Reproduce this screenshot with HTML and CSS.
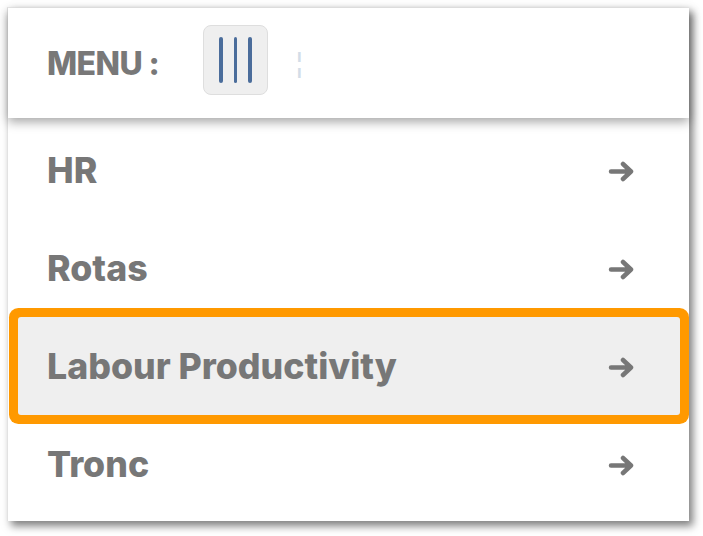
FILE: index.html
```html
<!DOCTYPE html>
<html lang="en">
<head>
    <meta charset="UTF-8">
    <meta name="viewport" content="width=device-width, initial-scale=1.0">
    <title>Menu</title>
    <link rel="stylesheet" href="styles.css">
</head>
<body>
    <div class="panel">
        <header class="menu-header">
            <span class="menu-label">MENU :</span>
            <button class="menu-toggle" type="button" aria-label="Toggle menu">
                <span></span><span></span><span></span>
            </button>
            <span class="menu-ghost">¦</span>
        </header>

        <ul class="menu-list">
            <li class="menu-item">
                <span>HR</span>
                <svg class="arrow" width="27" height="21" viewBox="0 0 27 21"><path d="M3 10.5H23M15 3L23 10.5L15 18" fill="none" stroke="#777" stroke-width="4.5" stroke-linecap="round" stroke-linejoin="round"/></svg>
            </li>
            <li class="menu-item">
                <span>Rotas</span>
                <svg class="arrow" width="27" height="21" viewBox="0 0 27 21"><path d="M3 10.5H23M15 3L23 10.5L15 18" fill="none" stroke="#777" stroke-width="4.5" stroke-linecap="round" stroke-linejoin="round"/></svg>
            </li>
            <li class="menu-item active">
                <span>Labour Productivity</span>
                <svg class="arrow" width="27" height="21" viewBox="0 0 27 21"><path d="M3 10.5H23M15 3L23 10.5L15 18" fill="none" stroke="#777" stroke-width="4.5" stroke-linecap="round" stroke-linejoin="round"/></svg>
            </li>
            <li class="menu-item">
                <span>Tronc</span>
                <svg class="arrow" width="27" height="21" viewBox="0 0 27 21"><path d="M3 10.5H23M15 3L23 10.5L15 18" fill="none" stroke="#777" stroke-width="4.5" stroke-linecap="round" stroke-linejoin="round"/></svg>
            </li>
        </ul>
    </div>
</body>
</html>
```

FILE: styles.css
```css
body {
    font-family: 'Inter', 'Roboto', Arial, sans-serif;
    background-color: #fff;
    margin: 0;
    padding: 7px 0 20px 7px;
}
.panel {
    width: 681px;
    background-color: #fff;
    border-top: 1px solid #ececec;
    border-left: 1px solid #e2e2e2;
    box-shadow: 4px 5px 8px rgba(0, 0, 0, 0.5);
}
.menu-header {
    height: 110px;
    display: flex;
    align-items: center;
    padding-left: 39px;
    background-color: #fff;
    box-shadow: 0 4px 10px rgba(0, 0, 0, 0.35);
    position: relative;
    z-index: 1;
}
.menu-label {
    font-size: 32px;
    font-weight: 800;
    color: #787878;
    letter-spacing: -0.6px;
}
.menu-toggle {
    width: 65px;
    height: 70px;
    margin-left: 44px;
    margin-top: -6px;
    background-color: #efefef;
    border: 1px solid #dedede;
    border-radius: 8px;
    display: flex;
    justify-content: center;
    align-items: center;
    gap: 11px;
    padding: 0;
}
.menu-toggle span {
    width: 3.5px;
    height: 46px;
    border-radius: 2px;
    background-color: #4b6d9b;
}
.menu-ghost {
    font-size: 30px;
    color: #d3dde8;
    margin-left: 27px;
}
.menu-list {
    list-style: none;
    margin: 0;
    padding: 3px 0 8px;
}
.menu-item {
    height: 98px;
    display: flex;
    justify-content: space-between;
    align-items: center;
    padding: 0 54px 0 39px;
    font-size: 35.7px;
    font-weight: 800;
    color: #777;
}
.menu-item .arrow {
    margin-top: 3px;
}
.menu-item.active {
    margin: 0 9px 0 10px;
    padding: 0 45px 0 29px;
    background-color: #efefef;
    border-radius: 3px;
    box-shadow: 0 0 0 9px #ff9900;
}
```
